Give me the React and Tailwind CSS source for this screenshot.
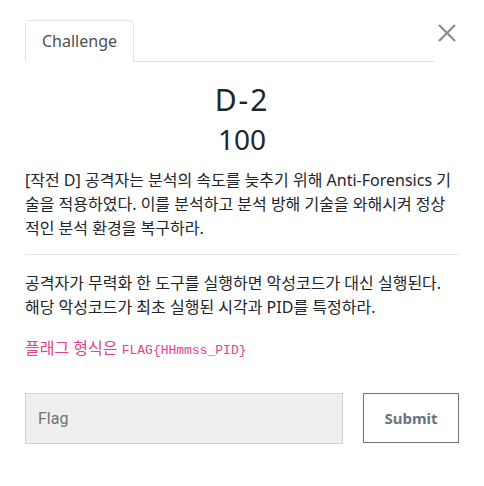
import React, { useState } from 'react';

const sans = 'font-["Source_Sans_Pro","Noto_Sans","Noto_Sans_CJK_KR",sans-serif]';

const App = () => {
  const [flag, setFlag] = useState('');

  return (
    <div className={`w-[484px] h-[486px] bg-white text-[#212529] ${sans}`}>
      <div className="px-[25px] pt-5">
        {/* tab header */}
        <div className="flex items-end">
          <div className="flex-1 flex border-b border-[#dee2e6] mr-[24px]">
            <div className="-mb-px px-4 h-[42px] flex items-center border border-[#dee2e6] border-b-white rounded-t-[5px] bg-white text-[16px] text-[#495057]">
              Challenge
            </div>
          </div>
          <button className="absolute left-[438px] top-[24px] w-[18px] h-[18px] text-[#888]">
            <svg viewBox="0 0 18 18" className="w-[18px] h-[18px]" fill="none" stroke="currentColor" strokeWidth="2">
              <path d="M1 1 L17 17 M17 1 L1 17" />
            </svg>
          </button>
        </div>

        {/* title */}
        <div className="text-center mt-[18px]">
          <h2 className="text-[30px] leading-[40px] font-normal tracking-[2px]">D-2</h2>
          <h3 className="text-[28px] leading-[36px] font-normal mt-[1px]">100</h3>
        </div>

        {/* description */}
        <p className="mt-[11px] text-[16px] leading-[24px]">
          [작전 D] 공격자는 분석의 속도를 늦추기 위해 Anti-Forensics 기술을 적용하였다. 이를 분석하고 분석 방해 기술을 와해시켜 정상적인 분석 환경을 복구하라.
        </p>
        <hr className="mt-[14px] border-[#e5e5e5]" />
        <p className="mt-[16px] text-[16px] leading-[24px]">
          공격자가 무력화 한 도구를 실행하면 악성코드가 대신 실행된다.
          <br />
          해당 악성코드가 최초 실행된 시각과 PID를 특정하라.
        </p>
        <p className="mt-[17px] text-[16px] leading-[24px] text-[#e83e8c]">
          플래그 형식은{' '}
          <code className='text-[13px] font-["Liberation_Mono","Noto_Sans_CJK_KR",monospace]'>FLAG{'{'}HHmmss_PID{'}'}</code>
        </p>

        {/* submit form */}
        <form className="flex mt-[30px]" onSubmit={(e) => e.preventDefault()}>
          <input
            type="text"
            value={flag}
            onChange={(e) => setFlag(e.target.value)}
            placeholder="Flag"
            className='w-[318px] h-[51px] px-3 bg-[#efefef] border border-[#ced4da] text-[16px] font-["Roboto",sans-serif] placeholder:text-[#6c757d] outline-none'
          />
          <button
            type="submit"
            className="ml-[20px] w-[96px] h-[50px] border border-[#6c757d] bg-white text-[#6c757d] text-[15px] font-bold"
          >
            Submit
          </button>
        </form>
      </div>
    </div>
  );
};

export default App;
